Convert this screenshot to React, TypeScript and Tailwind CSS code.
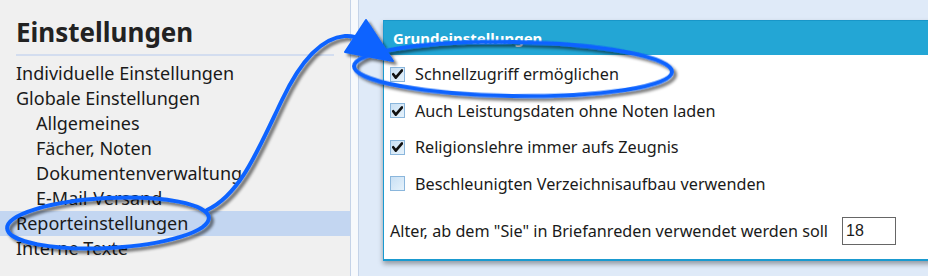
import React from "react";

const font = { fontFamily: '"Noto Sans", "Open Sans", sans-serif' };

function Check({ checked }: { checked: boolean }) {
  return (
    <div className="w-[15px] h-[15px] border border-[#8ab6dc] bg-gradient-to-br from-[#c9e0f4] to-[#e6f2fb] flex items-center justify-center shrink-0">
      {checked && (
        <svg width="11" height="10" viewBox="0 0 11 10">
          <path d="M1.2 5.2 L3.8 8.6 L10 1.4" fill="none" stroke="#111" strokeWidth="2.6" strokeLinecap="round" strokeLinejoin="round" />
        </svg>
      )}
    </div>
  );
}

export default function App() {
  const rows = [
    { label: "Schnellzugriff ermöglichen", checked: true },
    { label: "Auch Leistungsdaten ohne Noten laden", checked: true },
    { label: "Religionslehre immer aufs Zeugnis", checked: true },
    { label: "Beschleunigten Verzeichnisaufbau verwenden", checked: false },
  ];
  return (
    <div className="relative w-[928px] h-[276px] overflow-hidden flex bg-[#dfeaf8] text-[#1a1a1a]" style={font}>
      {/* Left panel */}
      <div className="w-[350px] shrink-0 bg-[#f0f0f0] flex flex-col pt-[13px]">
        <div className="px-4 text-[26px] font-bold leading-[38px] text-[#222]">Einstellungen</div>
        <div className="mx-4 mt-[3px] h-[2px] bg-[#d3ddef]" />
        <div className="flex flex-col mt-[5px] text-[18px] leading-[25px]">
          <div className="pl-4">Individuelle Einstellungen</div>
          <div className="pl-4">Globale Einstellungen</div>
          <div className="pl-9">Allgemeines</div>
          <div className="pl-9">Fächer, Noten</div>
          <div className="pl-9">Dokumentenverwaltung</div>
          <div className="pl-9">E-Mail-Versand</div>
          <div className="pl-4 bg-[#c3d6f1]">Reporteinstellungen</div>
          <div className="pl-4">Interne Texte</div>
        </div>
      </div>
      {/* Splitter */}
      <div className="w-[9px] shrink-0 border-l border-r border-[#c5d3e8] bg-[#f7f9fc]" />
      {/* Right area */}
      <div className="flex-1 pl-6 pt-5">
        <div className="w-[600px] h-[241px] bg-white border-l border-b-2 border-[#1a9ad0] shadow-[0_3px_5px_rgba(0,0,0,0.35)] flex flex-col">
          <div className="h-[35px] bg-[#23a6d5] border-t border-[#1896c8] flex items-center pl-[9px] text-white font-bold text-[15px]">
            Grundeinstellungen
          </div>
          <div className="flex flex-col pl-[6px] pt-[1px]">
            {rows.map((r) => (
              <div key={r.label} className="flex items-center gap-[10px] h-[36.5px] text-[16.2px]">
                <Check checked={r.checked} />
                <span>{r.label}</span>
              </div>
            ))}
            <div className="flex items-center mt-[15px] text-[16.2px]">
              <span>Alter, ab dem "Sie" in Briefanreden verwendet werden soll</span>
              <div
                className="ml-[14px] w-[54px] h-[28px] border border-[#666] flex items-center pl-[3px] text-[16px]"
                style={{ fontFamily: '"Liberation Sans", Arial, sans-serif' }}
              >
                18
              </div>
            </div>
          </div>
        </div>
      </div>

      {/* Annotation overlay */}
      <svg className="absolute inset-0 pointer-events-none" width="928" height="276" viewBox="0 0 928 276">
        <defs>
          <filter id="sh" x="-20%" y="-20%" width="140%" height="140%">
            <feGaussianBlur in="SourceAlpha" stdDeviation="1.6" />
            <feOffset dx="3" dy="3" result="b" />
            <feComponentTransfer>
              <feFuncA type="linear" slope="0.55" />
            </feComponentTransfer>
            <feMerge>
              <feMergeNode />
              <feMergeNode in="SourceGraphic" />
            </feMerge>
          </filter>
        </defs>
        <g filter="url(#sh)" fill="none" stroke="#0d63ff" strokeWidth="4" strokeLinecap="round">
          <ellipse cx="108" cy="223" rx="101" ry="25" transform="rotate(-3 108 223)" />
          <ellipse cx="513" cy="69" rx="159" ry="27" transform="rotate(1 513 69)" />
          <path d="M207 210 C 240 195, 258 150, 282 100 C 300 62, 320 38, 345 36 C 358 35, 366 42, 372 48" />
          <path d="M366 20 L 345 52 L 393 61 Z" fill="#0d63ff" stroke="#0d63ff" strokeWidth="2" strokeLinejoin="round" />
        </g>
      </svg>
    </div>
  );
}
